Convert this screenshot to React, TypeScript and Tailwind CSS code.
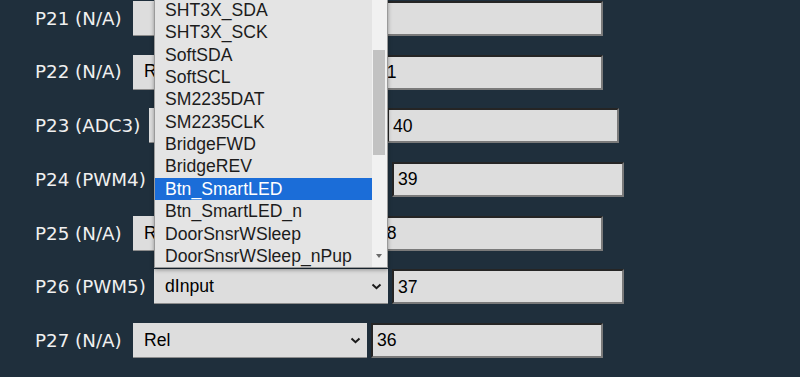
import React from "react";

type Row = {
  label: string;
  labelW: string;
  value: string;
  num: string;
  open?: boolean;
};

const rows: Row[] = [
  { label: "P21 (N/A)", labelW: "w-[98px]", value: "", num: "" },
  { label: "P22 (N/A)", labelW: "w-[98px]", value: "Rel", num: "41" },
  { label: "P23 (ADC3)", labelW: "w-[114px]", value: "Rel", num: "40" },
  { label: "P24 (PWM4)", labelW: "w-[119px]", value: "Rel", num: "39" },
  { label: "P25 (N/A)", labelW: "w-[98px]", value: "Rel", num: "38" },
  { label: "P26 (PWM5)", labelW: "w-[119px]", value: "dInput", num: "37", open: true },
  { label: "P27 (N/A)", labelW: "w-[98px]", value: "Rel", num: "36" },
  { label: "P28 (N/A)", labelW: "w-[98px]", value: "", num: "" },
];

const options = [
  "SHT3X_SDA",
  "SHT3X_SCK",
  "SoftSDA",
  "SoftSCL",
  "SM2235DAT",
  "SM2235CLK",
  "BridgeFWD",
  "BridgeREV",
  "Btn_SmartLED",
  "Btn_SmartLED_n",
  "DoorSnsrWSleep",
  "DoorSnsrWSleep_nPup",
];

function Chevron() {
  return (
    <svg width="11" height="7" viewBox="0 0 11 7" className="shrink-0">
      <path d="M1.5 1.5 L5.5 5.2 L9.5 1.5" fill="none" stroke="#1a1a1a" strokeWidth="2" />
    </svg>
  );
}

function Popup() {
  return (
    <div className="absolute bottom-full left-0 mb-[1px] w-[234px] border border-[#9a9a9a] bg-[#e4e4e4] shadow-[0_2px_4px_rgba(0,0,0,0.35)] flex">
      <div className="flex-1 flex flex-col">
        {options.map((o) => (
          <div
            key={o}
            className={
              o === "Btn_SmartLED"
                ? "h-[22.4px] leading-[22.4px] pl-[10px] bg-[#1b6dd8] text-white whitespace-nowrap"
                : "h-[22.4px] leading-[22.4px] pl-[10px] text-[#1c1c1c] whitespace-nowrap"
            }
          >
            {o}
          </div>
        ))}
      </div>
      <div className="w-[15px] bg-[#f1f1f1] relative">
        <div className="absolute left-[1px] right-[2px] top-[51px] h-[105px] bg-[#c2c2c2]" />
        <div className="absolute left-[4px] bottom-[9px] w-0 h-0 border-l-[3.5px] border-r-[3.5px] border-t-[4px] border-l-transparent border-r-transparent border-t-[#6a6a6a]" />
      </div>
    </div>
  );
}

export default function App() {
  return (
    <div
      className="w-[800px] h-[377px] overflow-hidden bg-[#1f2f3c] text-[17.6px]"
      style={{ fontFamily: '"Liberation Sans", Arial, sans-serif' }}
    >
      <div className="flex flex-col gap-[18.7px] pt-[1px] pl-[35px]">
        {rows.map((r) => (
          <div key={r.label} className="flex items-center h-[35px]">
            <div
              className={`${r.labelW} shrink-0 text-[#f0f0f0] text-[18.3px] whitespace-nowrap`}
              style={{ fontFamily: '"DejaVu Sans", Verdana, sans-serif' }}
            >
              {r.label}
            </div>
            <div className="relative">
              <div className="w-[234px] h-[35px] bg-[#dddddd] border-b border-[#8c8c8c] flex items-center justify-between pl-[11px] pr-[6px] text-black">
                <span>{r.value}</span>
                <Chevron />
              </div>
              {r.open ? <Popup /> : null}
            </div>
            <div className="ml-[4px] w-[232px] h-[35px] bg-[#dddddd] border-2 [border-style:inset] border-[#7a7a7a] flex items-center pl-[4px] text-black">
              {r.num}
            </div>
          </div>
        ))}
      </div>
    </div>
  );
}
